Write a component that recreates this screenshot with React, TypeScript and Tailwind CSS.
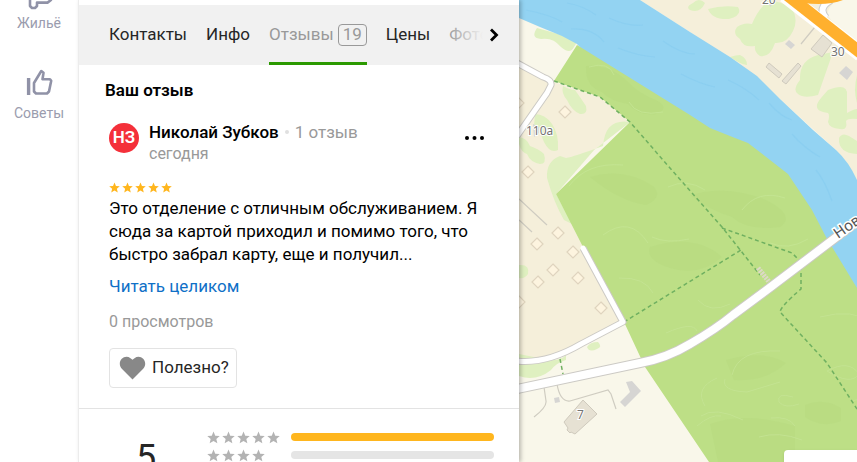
import React from 'react';

const STAR = 'M12 1l3.2 7.6 8.3.7-6.3 5.4 1.9 8.1L12 18.500l-7.100 4.300 1.900-8.100L.5 9.300l8.300-.7z';

const Stars: React.FC<{ count: number; className: string; gap: string }> = ({ count, className, gap }) => (
  <div className={`flex ${gap}`} role="img" aria-label={`${count} из 5`}>
    {Array.from({ length: count }, (_, i) => (
      <svg key={i} viewBox="0 0 24 24" className={className} fill="currentColor">
        <path d={STAR} />
      </svg>
    ))}
  </div>
);

const Sidebar: React.FC = () => (
  <nav className="w-[78px] shrink-0 flex flex-col items-center text-sm leading-5 text-[#9a9cae]">
    <a href="#housing" className="flex flex-col items-center">
      <svg width="28" height="13" viewBox="25 -2 28 13" fill="none" stroke="#9092a7" strokeWidth="2.6" strokeLinejoin="round">
        <path d="M30 -4V4l2 2h3l2-2V.6h10.500L51 -2v-3" />
      </svg>
      <span>Жильё</span>
    </a>
    <a href="#tips" className="flex flex-col items-center mt-9">
      <svg width="28" height="28" viewBox="25 69 28 28" fill="none" stroke="#9092a7" strokeWidth="2.6" strokeLinejoin="round">
        <path d="M28.600 78v17" strokeWidth="3.400" />
        <path d="M34 83l7.300-12 2.200 1.700L42.500 79.300h7.500l1.200 1.500-2.200 10.700-2 2H36l-2-2z" />
      </svg>
      <span className="mt-[6px]">Советы</span>
    </a>
  </nav>
);

const tabs = ['Контакты', 'Инфо', 'Отзывы', 'Цены', 'Фото'];

const Tabs: React.FC = () => (
  <div className="relative mt-[5px] h-[60px] bg-[#f1f1f1] overflow-hidden">
    <div className="flex h-full gap-[19px] pl-[30px] text-[17px] text-[#262626]">
      {tabs.map((tab) =>
        tab === 'Отзывы' ? (
          <button key={tab} className="flex items-center gap-1 border-b-3 border-t-3 border-t-transparent border-[#2b9900] text-[#999]">
            {tab}
            <span className="flex h-[22px] items-center rounded border border-[#999] px-1">19</span>
          </button>
        ) : (
          <button key={tab} className={tab === 'Фото' ? 'text-[#999]' : ''}>{tab}</button>
        )
      )}
    </div>
    <div className="absolute inset-y-0 right-0 flex w-[72px] bg-linear-to-r from-transparent to-[#f1f1f1] to-50%">
      <button aria-label="Дальше" className="ml-auto mr-5">
        <svg width="10" height="14" viewBox="0 0 10 14" fill="none" stroke="#000" strokeWidth="2.800">
          <path d="M2 1.500L7.500 7 2 12.500" />
        </svg>
      </button>
    </div>
  </div>
);

const Review: React.FC = () => (
  <section className="pl-[30px] pr-[34px] pb-5 border-b border-[#e3e3e3]">
    <h2 className="-ml-1 mt-[13px] text-[17px] leading-6 font-semibold text-black">Ваш отзыв</h2>
    <div className="mt-[18px] flex gap-[10px]">
      <div className="mt-[3px] flex size-[30px] items-center justify-center rounded-full bg-[#f4303a] text-[17px] font-semibold text-white">НЗ</div>
      <div>
        <div className="flex items-center text-[17px] leading-6">
          <span className="font-medium text-black">Николай Зубков</span>
          <span className="mx-[6px] size-1 rounded-full bg-[#e0e0e0]" />
          <span className="text-[#999]">1 отзыв</span>
        </div>
        <div className="text-base leading-5 text-[#999]">сегодня</div>
      </div>
      <button aria-label="Ещё" className="ml-auto self-start">
        <svg width="20" height="30" viewBox="0 0 20 30">
          <circle cx="2" cy="18" r="2" />
          <circle cx="9.500" cy="18" r="2" />
          <circle cx="17" cy="18" r="2" />
        </svg>
      </button>
    </div>
    <div className="mt-[18px] text-[#ffb61e]">
      <Stars count={5} className="size-[11px]" gap="gap-[2px]" />
    </div>
    <p className="mt-1 whitespace-nowrap text-[17px] leading-[23px] text-black">
      Это отделение с отличным обслуживанием. Я<br />
      сюда за картой приходил и помимо того, что<br />
      быстро забрал карту, еще и получил...
    </p>
    <a href="#full" className="mt-2 block text-[17px] leading-6 text-[#0f70c7]">Читать целиком</a>
    <div className="mt-3 text-base leading-6 text-[#999]">0 просмотров</div>
    <button className="mt-[14px] flex h-10 items-center gap-[6px] rounded border border-[#e3e3e3] pl-[9px] pr-[7px] text-[17px] text-[#262626]">
      <svg width="27" height="24" viewBox="0 0 27 24" fill="#888">
        <path d="M13.500 23.500L2.800 12.800C-3 6 5-2.500 11.500 2.200l2 1.600 2-1.600C22-2.500 30 6 24.200 12.800z" />
      </svg>
      Полезно?
    </button>
  </section>
);

const ratings = [
  { stars: 5, fill: 'bg-[#ffb61e]' },
  { stars: 4, fill: 'bg-[#e5e5e5]' },
  { stars: 3, fill: 'bg-[#e5e5e5]' },
];

const Rating: React.FC = () => (
  <section className="flex pr-[25px] pt-[22px]">
    <div className="w-32 pl-[6px] pt-1 text-center text-[36px] leading-[46px] text-[#262626]">5</div>
    <div className="flex flex-1 flex-col gap-[6px]">
      {ratings.map((row) => (
        <div key={row.stars} className="flex h-3 items-center">
          <div className="w-[84px] text-[#b3b3b3]">
            <Stars count={row.stars} className="size-[13px]" gap="gap-[2px]" />
          </div>
          <div className={`h-2 flex-1 rounded ${row.fill}`} />
        </div>
      ))}
    </div>
  </section>
);

// [x, y] centres of the small garden houses
const houses = [
  [565, 112], [528, 172], [558, 233], [537, 244], [573, 252], [553, 270],
  [538, 282], [578, 278], [519, 302], [601, 308], [518, 103],
];

const MapView: React.FC = () => (
  <div className="relative flex-1 overflow-hidden bg-[#f9f7ea]">
    <svg className="size-full" viewBox="519 0 338 462" preserveAspectRatio="xMinYMin slice" fill="none">
      <path fill="#f9f7ea" d="M519 0h338v462H519z" />
      <path fill="#f5efda" d="M640 0H857V200L836 150 780 99 690 32z" />
      <path fill="#f5efda" d="M519 65l32 16 49 16 30 25-36 28-38 44 27 53 40 75q-65 37-104 39z" />

      {/* meadows */}
      <g fill="#dff0c0">
        <path d="M537 28q-7 10 4 11 12-2 20 8 9 8 13 0l3-5-15-7z" />
        <path d="M563 86q7 4 12 4 5 7 11 16 2 9-6 8-8-3-13-14-6-7-4-14z" />
        <path d="M535 114q10 0 17 10 7 10 6 26-8 4-14-8-4-11-10-16z" />
        <path d="M519 137q8 1 11 9 9 3 14 8 3 10-4 10-10-2-13-10-6-2-8-10z" />
        <path d="M630 122q-25-4-27 24-30 11-37 12l-6-2q-14 5-13 22 7 25 17 42l8 4-16-30 38-44z" />
        <path d="M519 265q11-1 9 9-3 5-9 4z" />
        <path d="M519 354l30 6q12 1 17-5v5q-10 3-15 10-15 12-32 6z" />
        <path d="M587 347q3-5 11-5 5 5-1 7-8 4-10-2z" />
        <path d="M705 3q-6-6-12 0-8 4-3 7 10 4 15-7zM708 9q14-4 30-2 5 8-9 12-17 1-21-10z" />
        <path d="M769 0q12 2 22 7 8 12 2 24-6 13-18 12-5 15-15 13-6-4-5-10-12 2-15-7-8-5-3-12 7-5 15-3 6-15 17-24z" />
        <path d="M730 57q6-2 10-2 7 3 7 10-7-1-17-8zM833 52l-15 43q-14 4-20-1-6-4 2-14-1-20 18-25z" />
        <path d="M828 90q20-8 19 5v18q7-4 10-4v10q-9-1-11 2 2 10-6 8-11-1-12-7 2-7 0-9-18-2-7-15zM857 75q-4 15 0 28zM839 138q3-6 10-2l8 5v13q-19-1-18-16zM857 3q-4 5 0 6z" />
      </g>

      {/* river */}
      <path fill="#93d3f2" d="M519 0H640L690 32l40 25 27 19 23 23 33 31 23 20q13 12 21 30V300H820L700 180 577 44l-15-8-22-9-21-9z" />
      <g stroke="#87cdef" strokeWidth="1.200" opacity=".65">
        <path d="M526 10q25 5 36 12m5-19q17 3 29 12m-25 14q22-1 33 13m5-24q20 9 34 7m-25 23q20 8 37 9m8-16q18 13 32 13m-14 20q19 10 34 13m13-7q18 8 31 20m10 3q12 14 23 17m0 14q12 14 28 23m-4 13q9 11 16 31" />
      </g>

      {/* forest */}
      <path fill="#bddf86" d="M577 45L690 115l20 13 25 10 13 5 22 17 18 14 24 36 14 27 31 51V462H709L645 367 624 322 583 247 556 194l74-72-30-25-46-16z" />
      <g fill="#b7da80" opacity=".6">
        <path d="M586 66q22-2 40 14 13 14 30 20 15 8 0 14-18 2-28-10-18-3-26-12-17-5-16-26zM690 195q40-11 78 6 28 15 12 26-33 4-48-10-23-7-42-22zM590 177q33-10 63 9 11 11-7 19-27-4-56-28zM650 247q45-14 72 10-22 20-52 11-25-8-20-21zM710 424q35-13 85 2v36h-77zM805 405q18-8 36 3v13q-18 8-36-4zM726 360q38-11 60 3-20 19-52 17z" />
      </g>
      <g stroke="#c6e596" strokeWidth="1" opacity=".75">
        <path d="M589 67q20-6 25 8m15 27q8 15 34 10m-94 74q18-24 54-21m-20 70q27-20 45 8m20-56q19-9 37 3m-53 47q15 7 37 2m-70 39q26-1 34 15m89-83q16-21 43-12m-15 45q18 8 38-4m-110 61q12 14 32 4" />
        <path d="M666 333q27-12 31-2m35 44q6-26 48-24m-55 28q-4 12 22 13l33-10m40-65q33-9 53 6m-172 93q14-10 42 4m28-2q18-2 24 8m-98 0q14-12 24-10m72-19q-17-5-14 5 6 7 20 2m28-33q22-12 32 3-8 12-32-3m25 30q18-7 37 5m-130 31q20-6 43 3m-85-62q-23 10-12 28" />
      </g>

      {/* footpaths */}
      <g stroke="#6fb060" strokeWidth="1.500" strokeDasharray="4 3">
        <path d="M554 81l46 16 30 25 33 38 59 67 38 48M722 228l70 25 9 9v27q-20 17-21 23l47 51 30 46M624 322l117-72M560 359l3 15" />
      </g>
      <path d="M758 268l12 15" stroke="#ddd8c8" strokeWidth="5" strokeDasharray="2 1" />

      {/* service roads */}
      <g stroke="#cfccc1" strokeWidth="1.200">
        <path d="M519 199l28 26M519 220l13 12M544 387l2 14q1 6-12 16M557 384q3 18 13 17l38-11 3 4 5 15M801 44l18-22" />
      </g>

      {/* roads */}
      <g strokeLinejoin="round">
        <g stroke="#cccac5" strokeWidth="7">
          <path d="M517 63l26 14q9 3 8 8l-4 8-30 43M583 248l40 74-42 22q-34 20-64 17" />
          <path strokeWidth="10" d="M517 389L640 363q27-5 50-19 26-15 43-29l39-29 87-66" />
        </g>
        <g stroke="#fff" strokeWidth="5" strokeLinecap="round">
          <path d="M517 63l26 14q9 3 8 8l-4 8-30 43M583 248l40 74-42 22q-34 20-64 17" />
          <path strokeWidth="8" d="M517 389L640 363q27-5 50-19 26-15 43-29l39-29 87-66" />
        </g>
        <path fill="#f9f7ea" d="M837 0q-12 9-8 17 4 8 28 25V0z" />
        <path stroke="#ccc" strokeWidth="8" d="M831 0q-14 8-5 18" />
        <path stroke="#fff" strokeWidth="6" d="M831 0q-14 8-5 18" />
        <path stroke="#fff" strokeWidth="16" d="M785-5l76 59" />
        <path stroke="#ffb02e" strokeWidth="12" d="M786-6l75 59" />
        <path fill="#ffb02e" d="M795 0h48q-15 6-40 3z" />
      </g>

      {/* buildings */}
      <g fill="#fdf4df" stroke="#dfd4be" strokeWidth="1.200">
        {houses.map(([x, y]) => (
          <path key={`${x}-${y}`} d={`M${x} ${y - 6}l6 6-6 6-6-6z`} />
        ))}
      </g>
      <g fill="#e6e1d3" stroke="#cfcabd">
        <path d="M583 400l14 14-22 20-4-2-1 1-3-3 1-2-4-6z" />
        <path d="M823 35l9 8-10 14-11-8zM769 63l13 11-3 4-13-11zM798 63l3 3-15 18-4-3z" />
      </g>
      <g fill="#d6d5d3">
        <path d="M626 382l6-1 9 10-16 16-5-5 10-10zM554 398l5-1 1 5-5 1zM789 40l6 5-4 4-6-5zM846 66l7 6-6 8-8-7zM533 124l6 3v6l-5 4zM766 2l6 1-1 4z" />
      </g>

      <g fill="#737373" stroke="#fff" strokeWidth="2" paintOrder="stroke" fontFamily="'Noto Sans', sans-serif" fontSize="12">
        <text x="526" y="135">110а</text>
        <text x="762" y="4">20</text>
        <text x="831" y="56">30</text>
        <text x="577" y="419">7</text>
        <text x="838" y="239" fontSize="15" fill="#555" strokeWidth="3" transform="rotate(-35 838 239)">Нов</text>
      </g>
    </svg>
    <div className="absolute bottom-0 right-0 h-3 w-[73px] rounded-tl bg-white shadow-sm" />
  </div>
);

const App: React.FC = () => (
  <div className="flex h-screen overflow-hidden bg-white font-[Roboto,sans-serif]">
    <Sidebar />
    <main className="relative z-10 w-[441px] shrink-0 border-l border-[#ececec] bg-white shadow-[2px_0_4px_rgba(0,0,0,0.25)]">
      <Tabs />
      <Review />
      <Rating />
    </main>
    <MapView />
  </div>
);

export default App;
